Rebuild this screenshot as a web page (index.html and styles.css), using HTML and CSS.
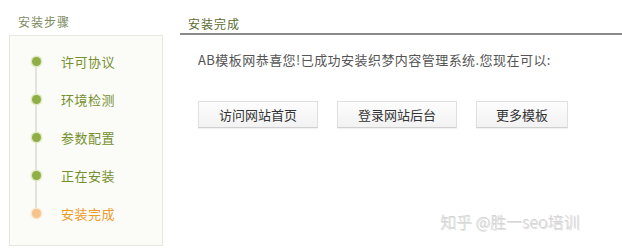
FILE: index.html
```html
<!DOCTYPE html>
<html>
<head>
<meta charset="utf-8">
<link rel="stylesheet" href="styles.css">
</head>
<body>
<div class="page">
  <div class="side">
    <div class="side-title">安装步骤</div>
    <div class="side-panel">
      <ul class="steps">
        <li class="step done"><span class="dot"></span><span class="label">许可协议</span></li>
        <li class="step done"><span class="dot"></span><span class="label">环境检测</span></li>
        <li class="step done"><span class="dot"></span><span class="label">参数配置</span></li>
        <li class="step done"><span class="dot"></span><span class="label">正在安装</span></li>
        <li class="step current"><span class="dot"></span><span class="label">安装完成</span></li>
      </ul>
    </div>
  </div>
  <div class="main">
    <div class="main-title"><span>安装完成</span></div>
    <div class="main-body">
      <p class="msg">AB模板网恭喜您!已成功安装织梦内容管理系统.您现在可以:</p>
      <div class="actions">
        <button class="btn w120">访问网站首页</button>
        <button class="btn w120">登录网站后台</button>
        <button class="btn w92">更多模板</button>
      </div>
    </div>
  </div>
  <div class="watermark">知乎 @胜一seo培训</div>
</div>
</body>
</html>
```
FILE: styles.css
```css
* { box-sizing: border-box; }
html, body { margin: 0; padding: 0; background: #fff; }
body {
  font-family: "Noto Sans CJK SC", "Noto Sans", sans-serif;
  width: 622px;
  height: 249px;
  overflow: hidden;
}
.page {
  position: relative;
  display: flex;
  width: 622px;
  height: 249px;
}
.side {
  width: 154px;
  margin-left: 9px;
  flex: none;
}
.side-title {
  height: 35px;
  padding: 14px 0 0 9px;
  font-size: 12px;
  line-height: 16px;
  color: #7d8a62;
  letter-spacing: 1px;
}
.side-panel {
  height: 211px;
  border: 1px solid #e6e8e0;
  background: #fbfcf8;
}
.steps {
  list-style: none;
  margin: 0;
  padding: 6px 0 0 0;
  position: relative;
}
.steps::before {
  content: "";
  position: absolute;
  left: 25px;
  top: 25px;
  height: 152px;
  width: 2px;
  background: #e3e3dc;
}
.step {
  display: flex;
  align-items: center;
  height: 38px;
  position: relative;
}
.dot {
  width: 9px;
  height: 9px;
  border-radius: 50%;
  margin-left: 22px;
  flex: none;
  position: relative;
  z-index: 1;
}
.done .dot {
  background: #8fae45;
  box-shadow: 0 0 0 1.5px #dfe9c4;
}
.current .dot {
  background: #f5c48a;
  box-shadow: 0 0 0 1.5px #fbe7cf;
}
.label {
  margin-left: 20px;
  font-size: 13px;
  letter-spacing: 0.5px;
}
.done .label { color: #74902e; }
.current .label { color: #ee9a2a; }

.main {
  flex: 1;
  margin-left: 17px;
}
.main-title {
  height: 35px;
  padding: 16px 0 0 8px;
  border-bottom: 2px solid #8a8a8a;
}
.main-title span {
  font-size: 12px;
  line-height: 16px;
  color: #5c6b33;
  letter-spacing: 1px;
  display: block;
}
.main-body {
  padding-left: 18px;
}
.msg {
  margin: 15px 0 0 0;
  font-size: 13px;
  line-height: 20px;
  color: #555;
  letter-spacing: 0.45px;
}
.actions {
  display: flex;
  gap: 19px;
  margin-top: 31px;
}
.btn {
  height: 27px;
  border: 1px solid #e0e0e0;
  border-bottom-color: #d0d0d0;
  background: linear-gradient(#fdfdfd, #f2f2f2);
  font-family: "Noto Sans CJK SC", sans-serif;
  font-size: 13px;
  color: #333;
  padding: 0;
  box-shadow: 0 1px 1px rgba(0,0,0,0.05);
}
.w120 { width: 120px; }
.w92 { width: 92px; }
.watermark {
  position: absolute;
  left: 441px;
  top: 211px;
  font-size: 16px;
  line-height: 22px;
  font-weight: 300;
  color: #dcdcdc;
  text-shadow: -1px -1px 0 #d0d0d0;
}
```
